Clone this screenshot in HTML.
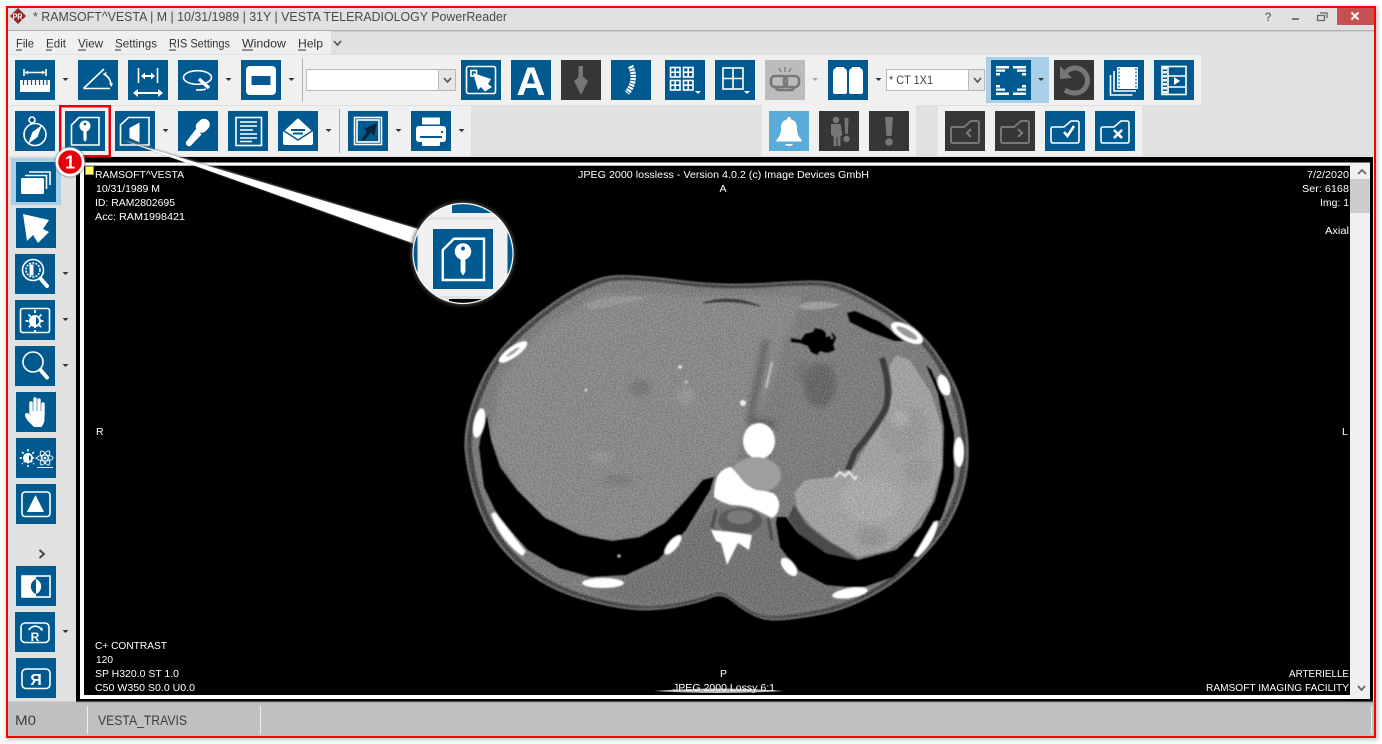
<!DOCTYPE html>
<html><head><meta charset="utf-8"><title>PowerReader</title>
<style>
html,body{margin:0;padding:0;background:#fff}
svg{display:block}
text{font-family:"Liberation Sans",Arial,sans-serif}
.b{fill:#005a8f}.d{fill:#363636}
.w{fill:#fff}.s{fill:none;stroke:#fff;stroke-width:1.6}
.g{fill:#777}.gs{fill:none;stroke:#777;stroke-width:2}
.t{fill:#fff;font-size:10.5px}
.m{fill:#333;font-size:12px}
.u{stroke:#333;stroke-width:1}
.a{fill:#333}
</style></head>
<body>
<svg width="1382" height="744" viewBox="0 0 1382 744" xmlns="http://www.w3.org/2000/svg">
<defs>
<filter id="sh" x="-5%" y="-5%" width="110%" height="110%"><feGaussianBlur stdDeviation="2"/></filter>
<filter id="bl" x="-5%" y="-5%" width="110%" height="110%"><feGaussianBlur stdDeviation="0.7"/></filter>
<filter id="bl2" x="-30%" y="-30%" width="160%" height="160%"><feGaussianBlur stdDeviation="1.6"/></filter>
<filter id="bl3" x="-20%" y="-20%" width="140%" height="140%"><feGaussianBlur stdDeviation="3"/></filter>
<filter id="n" x="0" y="0" width="100%" height="100%" color-interpolation-filters="sRGB"><feTurbulence type="fractalNoise" baseFrequency="0.65" numOctaves="2" seed="4"/><feColorMatrix values="2.4 0 0 0 -.7 2.4 0 0 0 -.7 2.4 0 0 0 -.7 0 0 0 0 .12"/></filter>
<path id="body" d="M636.5 275.5Q658 277 680.5 280Q703 283 726 283.5Q749 284 770 282.5Q791 281 808.5 280.5Q826 280 838.5 283.5Q851 287 870 297.5Q889 308 905.5 320.5Q922 333 933.5 348Q945 363 954 381.5Q963 400 966.5 423.5Q970 447 968 467Q966 487 957.5 507Q949 527 935 543.5Q921 560 905 574Q889 588 866.5 599Q844 610 824.5 614Q805 618 785.5 620Q766 622 754 616Q742 610 732 601.5Q722 593 711 598Q700 603 675.5 607.5Q651 612 629.5 609.5Q608 607 583.500 600Q559 593 540 581.500Q521 570 507 555Q493 540 484 521.500Q475 503 470 481.500Q465 460 464.500 446.500Q464 433 468 416.500Q472 400 480.500 381.500Q489 363 503 346.500Q517 330 538 313.500Q559 297 575 288.500Q591 280 603 277Q615 274 636.5 275.5Z"/>
<clipPath id="bc"><use href="#body"/></clipPath>
<clipPath id="mg"><circle cx="463" cy="253.5" r="50"/></clipPath>
<g id="keyic">
<path class="s" d="M6.5 14 14 6.5H34V34H6.5Z"/>
<circle class="w" cx="20" cy="15" r="5.500"/><circle class="b" cx="20" cy="13" r="1.300"/>
<path class="w" d="M18.400 18h3.200v10.500l-1.600 2.500-1.600-2.500z"/>
</g>
</defs>

<rect x="0" y="0" width="1382" height="744" fill="#fff"/>
<rect x="6" y="7" width="1372" height="733" fill="#c4c4c4" filter="url(#sh)"/>
<rect x="8" y="8" width="1366" height="728" fill="#e1e1e1"/>

<!-- title bar -->
<rect x="8" y="30" width="1366" height="1.4" fill="#b0b0b0"/>
<polygon points="18,8 26,16 18,24 10,16" fill="#8e2a2a"/>
<text x="12.5" y="19.5" font-size="8" font-weight="bold" fill="#fff" textLength="10" lengthAdjust="spacingAndGlyphs">PR</text>
<text x="33" y="21" font-size="12.5" fill="#4a4a4a" textLength="474" lengthAdjust="spacingAndGlyphs">* RAMSOFT^VESTA | M | 10/31/1989 | 31Y | VESTA TELERADIOLOGY PowerReader</text>
<text x="1264.5" y="21" font-size="12" font-weight="bold" fill="#777">?</text>
<rect x="1292" y="18" width="7" height="2" fill="#777"/>
<path d="M1317.5 15.5h7v5h-7zM1320 13h7v5" fill="none" stroke="#666" stroke-width="1.3"/>
<rect x="1337" y="8" width="37" height="17" fill="#c75050"/>
<path d="M1351.5 12.5l7 7M1358.5 12.5l-7 7" stroke="#fff" stroke-width="2"/>

<!-- menu -->
<rect x="8" y="31" width="323" height="23" fill="#f0f0f0"/>
<text class="m" x="16" y="47.500" textLength="18" lengthAdjust="spacingAndGlyphs">File</text><path class="u" d="M16 50h6"/>
<text class="m" x="46" y="47.500" textLength="20" lengthAdjust="spacingAndGlyphs">Edit</text><path class="u" d="M46 50h6"/>
<text class="m" x="78" y="47.500" textLength="25" lengthAdjust="spacingAndGlyphs">View</text><path class="u" d="M78 50h8"/>
<text class="m" x="115" y="47.500" textLength="42" lengthAdjust="spacingAndGlyphs">Settings</text><path class="u" d="M115 50h6"/>
<text class="m" x="169" y="47.500" textLength="61" lengthAdjust="spacingAndGlyphs">RIS Settings</text><path class="u" d="M169 50h7"/>
<text class="m" x="242" y="47.500" textLength="44" lengthAdjust="spacingAndGlyphs">Window</text><path class="u" d="M242 50h11"/>
<text class="m" x="298" y="47.500" textLength="25" lengthAdjust="spacingAndGlyphs">Help</text><path class="u" d="M298 50h8"/>
<path d="M334 41l3.500 4 3.500-4" fill="none" stroke="#555" stroke-width="1.700"/>

<!-- toolbar panels -->
<rect x="8" y="55" width="1193" height="50" fill="#f0f0f0"/>
<rect x="8" y="106" width="463" height="50" fill="#f0f0f0"/>
<rect x="762" y="105" width="154" height="51" fill="#f0f0f0"/>
<rect x="938" y="106" width="204" height="50" fill="#f0f0f0"/>
<rect x="986" y="57" width="63" height="46" fill="#a9cfe6"/>
<rect x="302" y="58" width="1" height="44" fill="#b0b0b0"/>
<rect x="339" y="109" width="1" height="44" fill="#b0b0b0"/>

<!-- combos -->
<rect x="306.500" y="69.500" width="149" height="21" fill="#fff" stroke="#b8b8b8"/>
<rect x="438.500" y="69.500" width="17" height="21" fill="#e6e6e6" stroke="#b8b8b8"/>
<path d="M444 78l3.500 4 3.500-4" fill="none" stroke="#555" stroke-width="1.700"/>
<rect x="886.500" y="69.500" width="98" height="21" fill="#fff" stroke="#b8b8b8"/>
<rect x="968.500" y="69.500" width="16" height="21" fill="#e6e6e6" stroke="#b8b8b8"/>
<path d="M974 78l3.500 4 3.500-4" fill="none" stroke="#555" stroke-width="1.700"/>
<text x="889" y="84" font-size="12" fill="#444" textLength="44" lengthAdjust="spacingAndGlyphs">* CT 1X1</text>

<!-- dropdown arrows -->
<g class="a">
<path d="M62.500 78h6l-3 3zM225.500 78h6l-3 3zM288.500 78h6l-3 3zM875.500 78h6l-3 3zM1038 78h6l-3 3z"/>
<path d="M162.500 129h6l-3 3zM325.500 129h6l-3 3zM395.500 129h6l-3 3zM458.500 129h6l-3 3z"/>
<path d="M62.500 272h6l-3 3zM62.500 318h6l-3 3zM62.500 364h6l-3 3zM62.500 630h6l-3 3z"/>
</g>
<path d="M812 78h6l-3 3z" fill="#aaa"/>

<!-- ROW 1 -->
<g transform="translate(15,60)"><rect class="b" width="40" height="40"/>
<path class="w" d="M5 20h30v12H5z"/><path d="M8.500 20v5M12.500 20v5M16.500 20v5M20.500 20v5M24.500 20v5M28.500 20v5M32 20v5" stroke="#005a8f" stroke-width="1.200"/>
<path class="s" d="M9 9v7M31 9v7M10 12.500h20" stroke-width="1.100"/><path class="w" d="M10 12.500l3-2v4zM30 12.500l-3-2v4z"/></g>

<g transform="translate(78,60)"><rect class="b" width="40" height="40"/>
<path class="s" d="M5.500 28.500H32M5.500 28.500 26 9"/><path class="s" d="M26 14q6 3.500 7 10" stroke-width="1.400"/><path class="w" d="M24.500 14l4-2-.500 4zM33.500 27l-2.500-4 4 .500z"/></g>

<g transform="translate(128,60)"><rect class="b" width="40" height="40"/>
<path class="s" d="M10.500 8v15M29.500 8v15"/><path d="M14 16h12" stroke="#fff" stroke-width="2"/><path class="w" d="M13 16l4-3.500v7zM27 16l-4-3.500v7z"/>
<path d="M7 33h26" stroke="#fff" stroke-width="2"/><path class="w" d="M5 33l5-4v8zM35 33l-5-4v8z"/></g>

<g transform="translate(178,60)"><rect class="b" width="40" height="40"/>
<ellipse class="s" cx="19.500" cy="17.500" rx="14" ry="6.800" stroke-width="2"/>
<path d="M21 19 31 28" stroke="#fff" stroke-width="3.500"/><path d="M18 30q8 0 10-1" class="s" stroke-width="1"/></g>

<g transform="translate(241,60)"><rect class="b" width="40" height="40"/>
<rect class="w" x="5" y="6" width="30" height="29" rx="4"/><rect class="b" x="10.500" y="16" width="19" height="9"/></g>

<g transform="translate(461,60)"><rect class="b" width="40" height="40"/>
<rect class="s" x="5.500" y="6.500" width="29" height="27" rx="2"/><rect class="s" x="10" y="10.500" width="5.500" height="5.500"/>
<path class="w" d="M12 13 30 19 27 24 31 27 24 31.500 20 27 17 30z"/></g>

<g transform="translate(511,60)"><rect class="b" width="40" height="40"/>
<text x="20" y="35" font-size="40" font-weight="bold" fill="#fff" text-anchor="middle">A</text></g>

<g transform="translate(561,60)"><rect class="d" width="40" height="40"/>
<path class="g" d="M17.500 6h4.500v12h-4.500z"/><path class="g" d="M13 21l7-6 7 6-7 14z"/></g>

<g transform="translate(611,60)"><rect class="b" width="40" height="40"/>
<path d="M19.500 6q3.500 7 2.500 14t-6 13" fill="none" stroke="#fff" stroke-width="5.500" stroke-dasharray="2.200 .9"/></g>

<g transform="translate(665,60)"><rect class="b" width="40" height="40"/>
<g id="mini"><rect class="s" x="5.500" y="7.500" width="9.500" height="9.500" stroke-width="1.600"/><path class="s" d="M10.200 7.500v9.500M5.500 12.200h9.500" stroke-width="1.400"/></g>
<use href="#mini" x="13"/><use href="#mini" y="13"/><use href="#mini" x="13" y="13"/>
<path class="w" d="M30 31h6l-3 3z"/></g>

<g transform="translate(715,60)"><rect class="b" width="40" height="40"/>
<rect class="s" x="8" y="8" width="20" height="21" stroke-width="2.800"/><path class="s" d="M18 8v21M8 18.500h20" stroke-width="2.800"/>
<path class="w" d="M29 31h6l-3 3z"/></g>

<g transform="translate(765,60)"><rect width="40" height="40" fill="#bcbcbc"/>
<g fill="none" stroke="#777" stroke-width="2.600"><rect x="6" y="16" width="16" height="11" rx="4"/><rect x="19" y="16" width="15" height="11" rx="4"/><path d="M13 30h14q2-1 2-3M13 30q-2-1-2-3"/><path d="M20 7v5M14 8l2 4M26 8l-2 4" stroke-width="1.300"/></g></g>

<g transform="translate(828,60)"><rect class="b" width="40" height="40"/>
<path class="w" d="M8 7h8v1q3 1 3 4v20q0 2-2 2H7q-2 0-2-2V12q0-3 3-4zM24 7h8v1q3 1 3 4v20q0 2-2 2H23q-2 0-2-2V12q0-3 3-4z"/></g>

<g transform="translate(991,60)"><rect class="b" width="40" height="40"/>
<g class="w"><path d="M5 6h13v2.500H5zM5 9.500h9v2.200H5zM5 13h4v2.500H5zM22 6h13v2.500H22zM26 9.500h9v2.200h-9zM31 13h4v2.500h-4zM5 32.500h13V35H5zM5 28.500h9v2.200H5zM5 25h4v2.500H5zM22 32.500h13V35H22zM26 28.500h9v2.200h-9zM31 25h4v2.500h-4z"/></g></g>

<g transform="translate(1054,60)"><rect class="d" width="40" height="40"/>
<path d="M12 12Q16 8 21 8A12.500 12.500 0 0 1 21 33Q15 33 11 30" fill="none" stroke="#777" stroke-width="5"/><path class="g" d="M6 6v13l12-1z"/></g>

<g transform="translate(1104,60)"><rect class="b" width="40" height="40"/>
<rect class="w" x="13" y="7" width="21" height="22" rx="1"/><path d="M15 8v20M32 8v20" stroke="#005a8f" stroke-width="1.200" stroke-dasharray="2 1.500"/>
<path class="s" d="M10 11v20h22M6.500 15v20h22" stroke-width="1.800"/></g>

<g transform="translate(1154,60)"><rect class="b" width="40" height="40"/>
<rect class="s" x="8" y="6.500" width="24" height="28"/><path class="s" d="M14 6.500v28M14 16h18M14 27h18"/><path d="M11 7v27" stroke="#fff" stroke-width="4" stroke-dasharray="2.500 1.500"/>
<path class="w" d="M20 17l6 4-6 4z"/></g>

<!-- ROW 2 -->
<g transform="translate(15,111)"><rect class="b" width="40" height="40"/>
<circle class="s" cx="20" cy="23.500" r="11"/><circle class="s" cx="17" cy="9" r="3" stroke-width="1.300"/>
<path class="w" d="M27 14 22.500 26 13 33l4.500-12z"/></g>

<g transform="translate(65,111)"><rect class="b" width="40" height="40"/><use href="#keyic"/></g>

<g transform="translate(115,111)"><rect class="b" width="40" height="40"/>
<path class="s" d="M5.500 14 13.500 6.500H34V34H5.500Z"/><path class="w" d="M14.500 17 24.500 11.500V31.500L14.500 27z"/></g>

<g transform="translate(178,111)"><rect class="b" width="40" height="40"/>
<path class="w" d="M8 31 18 18l5.500 5.500L12.500 35q-2 1-3.500-.5T8 31z"/><path d="M23.500 16 26 13.500" stroke="#fff" stroke-width="11.500" stroke-linecap="round"/></g>

<g transform="translate(228,111)"><rect class="b" width="40" height="40"/>
<rect class="s" x="8" y="6.500" width="25.500" height="28"/><path class="s" d="M12 11h17M12 15h17M12 19h13M12 23h17M12 27h17M12 30.500h12" stroke-width="1.700"/></g>

<g transform="translate(278,111)"><rect class="b" width="40" height="40"/>
<path class="w" d="M5 21 19 8q1-1 2 0l14 13v11q0 2-2 2H7q-2 0-2-2z"/>
<path d="M6 20l14 9 14-9" fill="none" stroke="#005a8f" stroke-width="1.500"/><path d="M13 19h14M15 22.500h10" stroke="#005a8f" stroke-width="2"/></g>

<g transform="translate(348,111)"><rect class="b" width="40" height="40"/>
<rect class="s" x="6.500" y="6.500" width="27" height="27"/><rect class="s" x="9" y="9" width="22" height="22"/>
<path fill="#06233a" d="M13 29 19 21l-3-3 13-6-3 13-3-4-6 8z"/></g>

<g transform="translate(411,111)"><rect class="b" width="40" height="40"/>
<path class="w" d="M11 6.500h18v7H11z"/><rect class="w" x="5" y="15" width="30" height="16" rx="3"/><rect class="b" x="9" y="25" width="22" height="2"/><rect class="w" x="11" y="27" width="18" height="8" rx="1"/><rect class="b" x="30" y="20" width="2" height="2"/></g>

<g transform="translate(769,111)"><rect width="40" height="40" fill="#5aacd8"/>
<path class="w" d="M20 6q2 0 2 2.500c5 1 6 5 6 9 0 6 2 8 4.500 11.500v1.500h-25V29c2.500-3.500 4.500-5.500 4.500-11.500 0-4 1-8 6-9Q18 6 20 6z"/><path class="w" d="M16 33h8q-1 2-4 2t-4-2z"/></g>

<g transform="translate(819,111)"><rect class="d" width="40" height="40"/>
<circle class="g" cx="17" cy="9" r="3.200"/><path class="g" d="M12 13h9.500l2 11-2 1v10h-3V26h-1v9h-3V25l-2.500-1z"/>
<path class="g" d="M25.500 7h4l-.7 16h-2.600z"/><circle class="g" cx="27.500" cy="28" r="3.200"/></g>

<g transform="translate(869,111)"><rect class="d" width="40" height="40"/>
<path class="g" d="M16 6h8l-1.500 19h-5z"/><circle class="g" cx="20" cy="31" r="3.800"/></g>

<g transform="translate(945,111)"><rect class="d" width="40" height="40"/>
<path class="gs" d="M8 16H19L26 10h6q2 0 2 2V30q0 2-2 2H8q-2 0-2-2V18q0-2 2-2z"/><path d="M26 18l-4 4 4 4" fill="none" stroke="#777" stroke-width="2.200"/></g>

<g transform="translate(995,111)"><rect class="d" width="40" height="40"/>
<path class="gs" d="M8 16H19L26 10h6q2 0 2 2V30q0 2-2 2H8q-2 0-2-2V18q0-2 2-2z"/><path d="M23 18l4 4-4 4" fill="none" stroke="#777" stroke-width="2.200"/></g>

<g transform="translate(1045,111)"><rect class="b" width="40" height="40"/>
<path class="s" stroke-width="2" d="M8 16H19L26 10h6q2 0 2 2V30q0 2-2 2H8q-2 0-2-2V18q0-2 2-2z"/><path d="M19 21l3.500 4L29 15" fill="none" stroke="#fff" stroke-width="2.600"/></g>

<g transform="translate(1095,111)"><rect class="b" width="40" height="40"/>
<path class="s" stroke-width="2" d="M8 16H19L26 10h6q2 0 2 2V30q0 2-2 2H8q-2 0-2-2V18q0-2 2-2z"/><path d="M19 19l8 8M27 19l-8 8" fill="none" stroke="#fff" stroke-width="2.600"/></g>

<!-- LEFT COLUMN -->
<rect x="11" y="158" width="50" height="47" fill="#a9cfe6"/>
<g transform="translate(16,162)"><rect class="b" width="40" height="40"/>
<rect class="w" x="5" y="16" width="23" height="16" rx="1.500"/><path class="s" stroke-width="1.800" d="M9 13.500h21.500V27M13 10h21v13"/></g>

<g transform="translate(16,208)"><rect class="b" width="40" height="40"/>
<path class="w" d="M7 6 33 12 27 21 33 24 22 35 17 27 11 33z"/></g>

<g transform="translate(15,254)"><rect class="b" width="40" height="40"/>
<circle class="s" cx="18" cy="16" r="10.500" stroke-width="2.400"/><circle cx="18" cy="16" r="7" fill="none" stroke="#fff" stroke-width="1.500" stroke-dasharray="2 1.200"/><path class="w" d="M14.500 10.500h4v11h-4z"/>
<path d="M25.500 24.500 32 32" stroke="#fff" stroke-width="4" stroke-linecap="round"/></g>

<g transform="translate(15,300)"><rect class="b" width="40" height="40"/>
<rect class="s" x="5.500" y="8.500" width="29" height="24" rx="2" stroke-width="1.800"/><circle class="w" cx="20" cy="21" r="6"/><path d="M20 10v22M10.500 21h19M13.500 14.500l13 13M26.500 14.500l-13 13" stroke="#fff" stroke-width="1.800" stroke-dasharray="3 2"/><path class="b" d="M21 17a4.200 4.200 0 0 1 0 8z"/></g>

<g transform="translate(15,346)"><rect class="b" width="40" height="40"/>
<circle class="s" cx="18" cy="16" r="10" stroke-width="2.800"/><path d="M25.500 24 32 31.500" stroke="#fff" stroke-width="4" stroke-linecap="round"/></g>

<g transform="translate(16,392)"><rect class="b" width="40" height="40"/>
<path d="M15 21V11M19 20V7M23 20V8M27 22V12" stroke="#fff" stroke-width="3.400" stroke-linecap="round"/>
<path class="w" d="M13.500 19h15v8q0 4-3 8H18q-3-3-6-6-3-4-3-6t2-2q2 0 4 3z"/></g>

<g transform="translate(16,438)"><rect class="b" width="40" height="40"/>
<circle class="w" cx="12" cy="20" r="5"/><path d="M12 11v18M3.500 20h17M6 14l12 12M18 14 6 26" stroke="#fff" stroke-width="1.500" stroke-dasharray="2.500 1.500"/><path class="b" d="M13 17a3.200 3.200 0 0 1 0 6z"/>
<g fill="none" stroke="#fff" stroke-width=".9"><ellipse cx="29" cy="20" rx="8" ry="3"/><ellipse cx="29" cy="20" rx="8" ry="3" transform="rotate(60 29 20)"/><ellipse cx="29" cy="20" rx="8" ry="3" transform="rotate(-60 29 20)"/><path d="M21 29.500h16"/></g><circle class="w" cx="29" cy="20" r="1.300"/></g>

<g transform="translate(16,484)"><rect class="b" width="40" height="40"/>
<rect class="s" x="6" y="8" width="28" height="24.500" rx="3" stroke-width="1.800"/><path class="w" d="M19.500 11 28 28H11z"/></g>

<path d="M39.500 550l4.500 4-4.500 4" fill="none" stroke="#444" stroke-width="1.900"/>

<g transform="translate(16,566)"><rect class="b" width="40" height="40"/>
<rect class="s" x="6" y="10" width="28" height="21" stroke-width="1.200"/><path class="w" d="M6 10h14v21H6z"/><path class="b" d="M20 13a8 8 0 0 0 0 15z"/><path class="w" d="M20 13a8 8 0 0 1 0 15z"/></g>

<g transform="translate(15,612)"><rect class="b" width="40" height="40"/>
<rect class="s" x="6" y="11" width="28" height="19.500" rx="4" stroke-width="1.600"/><text x="20" y="29" font-size="12" font-weight="bold" fill="#fff" text-anchor="middle">R</text>
<path class="s" d="M13.500 18q6-7 13-1" stroke-width="1.500"/><path class="w" d="M28 19l-3-1 2-3z"/></g>

<g transform="translate(16,658)"><rect class="b" width="40" height="40"/>
<rect class="s" x="6" y="11" width="28" height="19.500" rx="4" stroke-width="1.800"/><text x="20" y="27" font-size="16" font-weight="bold" fill="#fff" text-anchor="middle">Я</text></g>

<!-- VIEWER -->
<rect x="76" y="157" width="1297" height="545" fill="#000"/>
<rect x="80" y="162.500" width="1270" height="536.500" fill="#fff"/>
<rect x="84" y="165.700" width="1266" height="529.300" fill="#000"/>
<rect x="1350" y="162.500" width="20" height="536.500" fill="#f0f0f0"/>
<rect x="1350" y="179" width="20" height="34" fill="#cdcdcd"/>
<path d="M1358 174l4-4 4 4" fill="none" stroke="#666" stroke-width="1.800"/>
<path d="M1358 686l3.500 4 3.500-4" fill="none" stroke="#666" stroke-width="1.800"/>

<!-- CT image -->
<g filter="url(#bl)">
<use href="#body" fill="#6d6d6d"/>
<use href="#body" fill="#3f3f3f" transform="translate(717 448) scale(.99) translate(-717 -448)"/>
<use href="#body" fill="#7c7c7c" transform="translate(717 448) scale(.97) translate(-717 -448)"/>
</g>
<g clip-path="url(#bc)">
<g filter="url(#bl3)">
<polygon fill="#8a8a8a" points="600,292 700,295 800,296 790,340 765,400 745,430 735,470 700,480 660,530 600,545 530,510 490,440 500,380 540,330"/>
<polygon fill="#7d7d7d" points="785,335 860,330 880,380 875,420 850,460 800,470 770,470 765,420"/>
<polygon fill="#727272" points="660,562 700,515 720,505 780,525 800,572 860,598 800,612 766,616 722,590 650,606 590,592"/>
</g>
</g>
<g filter="url(#bl)">
<path d="M584 305Q610 293 647 298 625 304 590 310z" fill="#a0a0a0" opacity=".7"/>
<path d="M798 305Q820 298 842 305 820 312 800 309z" fill="#ababab" opacity=".8"/>
<path d="M703 303Q730 294 760 306 730 299 703 303z" fill="#333" stroke="#333"/>
<!-- spleen -->
<polygon fill="#a6a6a6" points="896,355 910,360 931,393 942,427 942,467 931,503 910,533 889,550 858,557 833,543 812,527 798,510 794,493 805,480 833,477 854,467 868,443 886,417 893,393 889,367"/>
</g>
<g filter="url(#bl3)">
<ellipse cx="686" cy="396" rx="9" ry="9" fill="#9a9a9a"/><ellipse cx="640" cy="388" rx="11" ry="8" fill="#6f6f6f" opacity=".7"/>
<ellipse cx="600" cy="457" rx="11" ry="6" fill="#989898"/>
<ellipse cx="618" cy="480" rx="16" ry="5" fill="#707070" opacity=".6"/>
<ellipse cx="820" cy="385" rx="16" ry="22" fill="#5c5c5c" opacity=".75"/>
<ellipse cx="805" cy="372" rx="10" ry="9" fill="#666" opacity=".5"/>
<ellipse cx="905" cy="430" rx="24" ry="25" fill="#8b8b8b" opacity=".4"/>
<ellipse cx="900" cy="418" rx="9" ry="8" fill="#c2c2c2" opacity=".6"/>
<ellipse cx="870" cy="500" rx="30" ry="22" fill="#b6b6b6" opacity=".6"/>
<ellipse cx="872" cy="537" rx="16" ry="10" fill="#8c8c8c" opacity=".6"/>
<ellipse cx="918" cy="470" rx="15" ry="14" fill="#8f8f8f" opacity=".45"/>
<path d="M766 340 755 395 750 420 775 425" fill="none" stroke="#4a4a4a" stroke-width="7" opacity=".6"/>
</g>
<g clip-path="url(#bc)"><rect x="460" y="270" width="515" height="355" filter="url(#n)"/></g>
<g filter="url(#bl)">
<circle cx="680" cy="367" r="1.800" fill="#eee"/><circle cx="686" cy="382" r="1.500" fill="#ccc"/><circle cx="586" cy="390" r="1.300" fill="#eee"/><circle cx="743" cy="403" r="3" fill="#eee"/>
<path d="M772 362 766 388" stroke="#bbb" stroke-width="2.500"/>
<path d="M882 358Q892 390 885 410 870 435 855 452L848 470" fill="none" stroke="#3c3c3c" stroke-width="6"/>
<path d="M835 477l5-5 5 4 4-4 6 7 2-3" fill="none" stroke="#eee" stroke-width="2"/>
<polygon fill="#4c4c4c" points="788,518 800,535 826,553 858,560 848,553 826,540 806,524 794,505"/>
<!-- lungs -->
<polygon fill="#000" points="484,417 479,447 484,487 500,520 528,550 559,568 591,577 626,575 658,560 686,530 710,490 714,477 703,480 686,500 665,523 640,537 612,541 580,535 545,518 517,490 500,467 491,440 487,417"/>
<polygon fill="#000" points="926,365 938,393 944,427 943,467 935,500 921,527 896,550 858,560 826,553 798,533 786,517 777,517 776,523 780,547 798,570 826,585 861,588 893,577 921,550 942,517 954,480 954,433 945,400 931,370"/>
<polygon fill="#000" points="847,313 855,311 880,322 905,341 895,341 870,332 850,322"/>
<!-- stomach air -->
<path fill="#000" d="M791 338l10 2 4-6 8-2 2-4 8 2 5 6 5-3 3 5-3 7 2 5-8 3-7-2-3 4-6-3-3-6-8-3-9-1z"/>
<path d="M826 336q6-3 6 3" fill="none" stroke="#888" stroke-width="1.500"/>
<!-- ribs -->
<g fill="#fff">
<ellipse cx="513" cy="352" rx="17" ry="5.500" transform="rotate(-35 513 352)"/>
<ellipse cx="479" cy="423" rx="5.500" ry="15" transform="rotate(12 479 423)"/>
<path d="M491 514 495 512 526 552 522 556Q500 540 491 514z"/>
<ellipse cx="603" cy="583" rx="21" ry="5"/>
<ellipse cx="673" cy="545" rx="12" ry="4.500" transform="rotate(-50 673 545)"/>
<ellipse cx="789" cy="567" rx="11" ry="5.500" transform="rotate(50 789 567)"/>
<ellipse cx="850" cy="593" rx="18" ry="5" transform="rotate(-9 850 593)"/>
<path d="M914 556 934 522 938 521Q936 541 918 557z"/>
<ellipse cx="959" cy="452" rx="5" ry="15"/>
<ellipse cx="944" cy="385" rx="5.500" ry="11" transform="rotate(-20 944 385)"/>
<ellipse cx="907" cy="333" rx="18" ry="7.500" transform="rotate(30 907 333)"/>
</g>
<ellipse cx="907" cy="333" rx="12" ry="3.500" transform="rotate(30 907 333)" fill="#999"/>
<ellipse cx="513" cy="352" rx="8" ry="1.500" transform="rotate(-35 513 352)" fill="#999"/>
<!-- aorta & spine -->
<ellipse cx="759" cy="441" rx="16" ry="18" fill="#fff"/>
<ellipse cx="756" cy="475" rx="25" ry="18" fill="#9e9e9e"/>
<path fill="#fff" d="M717 477Q722 468 731 467 736 472 742 480 748 487 756 490 766 491 773 493 780 498 779 507 778 515 772 518 762 513 752 508 741 505 731 505 720 502 714 497 714 485 717 477z"/>
<ellipse cx="740" cy="521" rx="22" ry="13" fill="#5a5a5a"/>
<ellipse cx="740" cy="517" rx="13" ry="7" fill="#7a7a7a"/>
<path fill="#fff" d="M711 530 731 532 752 535 749 550 738 543 727 565 721 543 716 541z"/>
<path d="M716 510 712 528M768 518 772 540" stroke="#333" stroke-width="3" opacity=".6"/>
<circle cx="619" cy="556" r="1.200" fill="#ccc"/>
</g>

<!-- table sliver -->
<path d="M654 691Q720 686 784 691 720 695 654 691z" fill="#bbb"/>

<!-- overlay text -->
<rect x="85.500" y="166.500" width="8" height="8" fill="#ffff66" stroke="#888"/>
<g class="t">
<text class="t" x="95" y="178" textLength="89" lengthAdjust="spacingAndGlyphs">RAMSOFT^VESTA</text>
<text class="t" x="96" y="192" textLength="64" lengthAdjust="spacingAndGlyphs">10/31/1989 M</text>
<text class="t" x="95" y="206" textLength="80" lengthAdjust="spacingAndGlyphs">ID: RAM2802695</text>
<text class="t" x="95" y="220" textLength="90" lengthAdjust="spacingAndGlyphs">Acc: RAM1998421</text>
<text class="t" x="95" y="649" textLength="72" lengthAdjust="spacingAndGlyphs">C+ CONTRAST</text>
<text class="t" x="96" y="663" textLength="17" lengthAdjust="spacingAndGlyphs">120</text>
<text class="t" x="95" y="677" textLength="84" lengthAdjust="spacingAndGlyphs">SP H320.0 ST 1.0</text>
<text class="t" x="95" y="691" textLength="100" lengthAdjust="spacingAndGlyphs">C50 W350 S0.0 U0.0</text>
<text class="t" x="96" y="435">R</text>
<text class="t" x="1342" y="435">L</text>
<text class="t" x="578" y="178" textLength="291" lengthAdjust="spacingAndGlyphs">JPEG 2000 lossless - Version 4.0.2 (c) Image Devices GmbH</text>
<text class="t" x="719.500" y="192">A</text>
<text class="t" x="1307" y="178" textLength="42" lengthAdjust="spacingAndGlyphs">7/2/2020</text>
<text class="t" x="1302" y="192" textLength="47" lengthAdjust="spacingAndGlyphs">Ser: 6168</text>
<text class="t" x="1320" y="206" textLength="29" lengthAdjust="spacingAndGlyphs">Img: 1</text>
<text class="t" x="1325" y="234" textLength="24" lengthAdjust="spacingAndGlyphs">Axial</text>
<text class="t" x="720" y="677">P</text>
<text class="t" x="673" y="691" textLength="102" lengthAdjust="spacingAndGlyphs">JPEG 2000 Lossy 6:1</text>
<text class="t" x="1289" y="677" textLength="60" lengthAdjust="spacingAndGlyphs">ARTERIELLE</text>
<text class="t" x="1206" y="691" textLength="143" lengthAdjust="spacingAndGlyphs">RAMSOFT IMAGING FACILITY</text>
</g>

<!-- callout wedge -->
<polygon points="122,140 130,141 418,228 418,246" fill="#888" opacity=".6" filter="url(#bl)"/>
<polygon points="125,141 418,229 418,245" fill="#fff"/>

<!-- magnifier -->
<circle cx="463" cy="253.500" r="51.500" fill="#555" filter="url(#sh)"/>
<g clip-path="url(#mg)">
<rect x="410" y="200" width="110" height="110" fill="#f0f0f0"/>
<rect x="410" y="217" width="110" height="3" fill="#e3e3e3"/>
<rect x="452" y="200" width="60" height="13" fill="#005a8f"/>
<rect x="410" y="220" width="7.500" height="70" fill="#005a8f"/>
<rect x="507.500" y="220" width="8" height="70" fill="#005a8f"/>
<rect x="410" y="296" width="110" height="12" fill="#e1e1e1"/>
<rect x="449" y="299" width="60" height="10" fill="#000"/>
<g transform="translate(433,229) scale(1.500)"><rect class="b" width="40" height="40"/><use href="#keyic"/></g>
</g>
<circle cx="463" cy="253.500" r="50" fill="none" stroke="#fff" stroke-width="1.200"/>

<!-- status bar -->
<rect x="8" y="701.500" width="1366" height="34.500" fill="#c0c0c0"/>
<rect x="76" y="701.500" width="1298" height="1" fill="#9a9a9a"/>
<rect x="87" y="706" width="1" height="28" fill="#f0f0f0"/>
<rect x="260" y="706" width="1" height="28" fill="#f0f0f0"/>
<rect x="1371" y="706" width="1" height="28" fill="#f0f0f0"/>
<text x="15" y="725" font-size="13.500" fill="#3c3c3c" textLength="21" lengthAdjust="spacingAndGlyphs">M0</text>
<text x="98" y="725" font-size="13.500" fill="#3c3c3c" textLength="89" lengthAdjust="spacingAndGlyphs">VESTA_TRAVIS</text>

<!-- red frame -->
<rect x="7" y="7" width="1368" height="730" fill="none" stroke="#f00" stroke-width="2"/>

<!-- highlight -->
<rect x="60.250" y="106.250" width="49.500" height="50" fill="none" stroke="#e8000c" stroke-width="2.500"/>
<circle cx="70" cy="162" r="15.500" fill="#777" opacity=".6" filter="url(#bl)"/>
<circle cx="70" cy="162" r="14.500" fill="#fff"/>
<circle cx="70" cy="162" r="11.800" fill="#e8000c"/>
<text x="70" y="168.500" font-size="18" font-weight="bold" fill="#fff" text-anchor="middle">1</text>
</svg>
</body></html>
